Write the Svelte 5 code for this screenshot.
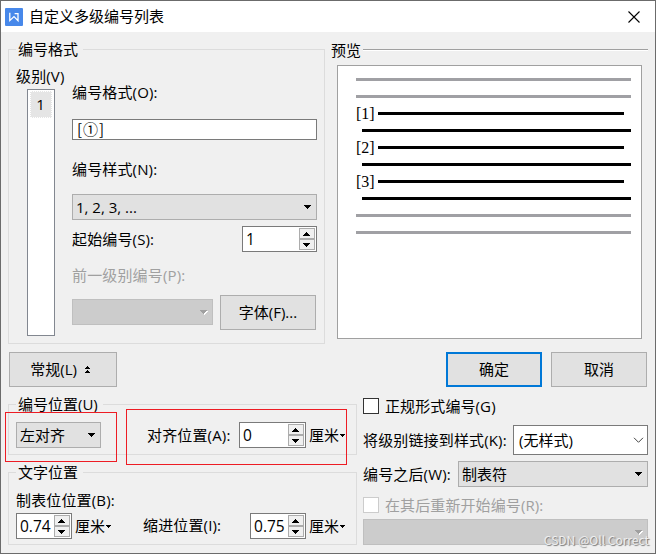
<script lang="ts">
  let level = 1;
  let numberFormat = '[①]';
  let startAt = '1';
  let alignAt = '0';
  let tabStop = '0.74';
  let indentAt = '0.75';
  let formal = false;
  let restart = false;

  const previewLines = [
    { kind: 'grey' },
    { kind: 'grey' },
    { kind: 'first', label: '[1]' },
    { kind: 'next' },
    { kind: 'first', label: '[2]' },
    { kind: 'next' },
    { kind: 'first', label: '[3]' },
    { kind: 'next' },
    { kind: 'grey' },
    { kind: 'grey' }
  ];

  function step(value: string, amount: number) {
    return String(Math.max(0, Number(value) + amount));
  }
</script>

{#snippet arrow()}
  <svg class="arrow" width="8" height="4" viewBox="0 0 8 4" shape-rendering="crispEdges">
    <path d="M0 0h7v1h-1v1h-1v1h-1v1h-1v-1h-1v-1h-1v-1h-1z" fill="currentColor" />
  </svg>
{/snippet}

{#snippet spinner(value, width, onstep)}
  <div class="spinner" style="width: {width}px">
    <span class="value">{value}</span>
    <div class="steps">
      <button aria-label="+" onclick={() => onstep(1)}>
        <svg width="8" height="4" viewBox="0 0 8 4" shape-rendering="crispEdges">
          <path d="M3 0h1v1h1v1h1v1h1v1h-7v-1h1v-1h1v-1h1z" />
        </svg>
      </button>
      <button aria-label="-" onclick={() => onstep(-1)}>
        <svg width="8" height="4" viewBox="0 0 8 4" shape-rendering="crispEdges">
          <path d="M0 0h7v1h-1v1h-1v1h-1v1h-1v-1h-1v-1h-1v-1h-1z" />
        </svg>
      </button>
    </div>
  </div>
{/snippet}

{#snippet unit()}
  <span class="unit">
    厘米
    <svg width="5" height="3" viewBox="0 0 5 3" shape-rendering="crispEdges">
      <path d="M0 0h5v1h-1v1h-1v1h-1v-1h-1v-1h-1z" />
    </svg>
  </span>
{/snippet}

<div class="dialog">
  <header>
    <svg class="logo" width="18" height="18" viewBox="0 0 18 18">
      <rect width="18" height="18" rx="1" fill="#4788ea" />
      <path d="M4.8 4.8V12.6L9 8.6L13 12.6V5.6H9.6" fill="none" stroke="#fff" stroke-width="1.3" />
    </svg>
    <h1>自定义多级编号列表</h1>
    <svg class="close" width="12" height="12" viewBox="0 0 12 12">
      <path d="M.5 .5L11.5 11.5M11.5 .5L.5 11.5" stroke="#000" stroke-width="1.1" />
    </svg>
  </header>

  <div class="top">
    <fieldset class="format">
      <legend>编号格式</legend>
      <div class="levels">
        <span class="label">级别(V)</span>
        <div class="level-list">
          <div class="level">{level}</div>
        </div>
      </div>
      <div class="fields">
        <span class="label">编号格式(O):</span>
        <div class="input">{numberFormat}</div>
        <span class="label style-label">编号样式(N):</span>
        <div class="select">1, 2, 3, ... {@render arrow()}</div>
        <div class="row start">
          <span class="label">起始编号(S):</span>
          {@render spinner(startAt, 75, (n) => (startAt = step(startAt, n)))}
        </div>
        <span class="label disabled-text previous">前一级别编号(P):</span>
        <div class="row font-row">
          <div class="select disabled">{@render arrow()}</div>
          <button class="btn">字体(F)...</button>
        </div>
      </div>
    </fieldset>

    <section class="preview">
      <div class="preview-title">预览<span></span></div>
      <div class="paper">
        {#each previewLines as line}
          <div class="line {line.kind}">
            {#if line.label}<span>{line.label}</span>{/if}
            <i></i>
          </div>
        {/each}
      </div>
    </section>
  </div>

  <div class="buttons">
    <button class="btn general">
      常规(L)
      <svg width="5" height="8" viewBox="0 0 5 8" shape-rendering="crispEdges">
        <path d="M2 0h1v1h1v1h1v1h-5v-1h1v-1h1zM2 4h1v1h1v1h1v1h-5v-1h1v-1h1z" />
      </svg>
    </button>
    <button class="btn primary">确定</button>
    <button class="btn">取消</button>
  </div>

  <div class="bottom">
    <div class="left">
      <fieldset class="position">
        <legend>编号位置(U)</legend>
        <div class="select">左对齐 {@render arrow()}</div>
        <span class="label">对齐位置(A):</span>
        {@render spinner(alignAt, 67, (n) => (alignAt = step(alignAt, n)))}
        {@render unit()}
      </fieldset>
      <fieldset class="text-position">
        <legend>文字位置</legend>
        <span class="label">制表位位置(B):</span>
        <div class="row">
          {@render spinner(tabStop, 56, (n) => (tabStop = step(tabStop, n)))}
          {@render unit()}
          <span class="label indent">缩进位置(I):</span>
          {@render spinner(indentAt, 56, (n) => (indentAt = step(indentAt, n)))}
          {@render unit()}
        </div>
      </fieldset>
    </div>

    <div class="right">
      <label class="check">
        <input type="checkbox" bind:checked={formal} />正规形式编号(G)
      </label>
      <div class="row link">
        <span class="label">将级别链接到样式(K):</span>
        <div class="combo">
          (无样式)
          <svg width="11" height="7" viewBox="0 0 11 7">
            <path d="M1 .8L5.5 5.3L10 .8" fill="none" stroke="#444" />
          </svg>
        </div>
      </div>
      <div class="row after">
        <span class="label">编号之后(W):</span>
        <div class="select">制表符 {@render arrow()}</div>
      </div>
      <label class="check disabled-text">
        <input type="checkbox" disabled bind:checked={restart} />在其后重新开始编号(R):
      </label>
      <div class="select disabled">{@render arrow()}</div>
    </div>
  </div>

  <div class="mark mark-align"></div>
  <div class="mark mark-offset"></div>
  <div class="watermark">CSDN @Oll Correct</div>
</div>

<style>
  .dialog,
  .dialog * {
    box-sizing: border-box;
  }

  .dialog {
    position: relative;
    width: 656px;
    height: 554px;
    overflow: hidden;
    border: 1px solid #6b6b6b;
    background: #f0f0f0;
    color: #000;
    font: 15px/20px 'Open Sans', 'Noto Sans CJK SC', sans-serif;
    white-space: nowrap;
  }

  header {
    display: flex;
    align-items: center;
    height: 31px;
    padding: 0 15px 0 4px;
    background: #fff;
  }

  h1 {
    flex: 1;
    height: 20px;
    margin: 0 0 2px 6px;
    font-size: 15px;
    font-weight: normal;
  }

  .top {
    display: flex;
    height: 304px;
    padding: 8px 7px 0;
  }

  fieldset {
    margin: 0;
    padding: 0;
    border: 1px solid #dcdcdc;
    min-width: 0;
  }

  legend {
    height: 19px;
    margin-left: 7px;
    padding: 0 5px 0 2px;
    line-height: 19px;
  }

  .format {
    display: flex;
    width: 317px;
    height: 304px;
  }

  .levels {
    width: 63px;
    padding: 7px 0 0 7px;
  }

  .label {
    display: block;
    height: 20px;
    letter-spacing: 0.15px;
  }

  .level-list {
    width: 28px;
    height: 247px;
    margin: 3px 0 0 11px;
    padding: 1px 2px;
    border: 1px solid #828790;
    background: #fff;
  }

  .level {
    height: 27px;
    padding-right: 1px;
    border: 1px dotted #fff;
    background: #e5e5e5;
    line-height: 24px;
    text-align: center;
  }

  .fields {
    width: 245px;
    padding-top: 23px;
  }

  .input {
    height: 21px;
    margin-top: 17px;
    padding-left: 4px;
    border: 1px solid #7a7a7a;
    background: #fff;
    font-family: 'Noto Sans CJK SC', sans-serif;
    letter-spacing: 1px;
    line-height: 17px;
  }

  .style-label {
    margin: 19px 0 15px;
  }

  .select {
    display: flex;
    align-items: center;
    justify-content: space-between;
    height: 26px;
    padding: 0 4px 0 3px;
    border: 1px solid #adadad;
    background: #e1e1e1;
  }

  .select.disabled {
    justify-content: flex-end;
    border-color: #bfbfbf;
    background: #ccc;
    color: #a0a0a0;
  }

  .disabled .arrow {
    filter: drop-shadow(1px 1px 0 #fff);
  }

  .disabled-text {
    color: #a0a0a0;
  }

  .row {
    display: flex;
    align-items: center;
  }

  .start {
    justify-content: space-between;
    margin-top: 6px;
  }

  .spinner {
    display: flex;
    flex: none;
    justify-content: space-between;
    height: 26px;
    padding: 1px 1px 1px 3px;
    border: 1px solid #7a7a7a;
    background: #fff;
  }

  .value {
    font-size: 15.5px;
    line-height: 22px;
  }

  .steps {
    display: flex;
    flex: none;
    flex-direction: column;
    width: 16px;
    height: 22px;
  }

  .steps button {
    display: flex;
    flex: 1;
    align-items: center;
    justify-content: center;
    margin: 0;
    padding: 0;
    border: 1px solid #acacac;
    background: #f0f0f0;
  }

  .previous {
    margin-top: 13px;
  }

  .font-row {
    justify-content: space-between;
    margin-top: 10px;
    padding-right: 1px;
  }

  .font-row .select {
    width: 141px;
    margin-bottom: 1px;
  }

  .btn {
    width: 96px;
    height: 35px;
    padding: 0 0 1px;
    border: 1px solid #adadad;
    background: #e1e1e1;
    color: #000;
    font: inherit;
  }

  .preview {
    width: 317px;
    margin-left: 6px;
  }

  .preview-title {
    display: flex;
    align-items: center;
    height: 19px;
    line-height: 16px;
  }

  .preview-title span {
    flex: 1;
    height: 2px;
    margin: 1px 0 0 2px;
    border-top: 1px solid #a0a0a0;
    border-bottom: 1px solid #fff;
  }

  .paper {
    width: 305px;
    height: 274px;
    margin: 6px 0 0 6px;
    padding: 5px 10px 0 18px;
    border: 1px solid #a0a0a0;
    background: #fff;
  }

  .line {
    display: flex;
    align-items: center;
    height: 17px;
  }

  .line i {
    flex: 1;
    height: 3px;
    background: #000;
  }

  .line.grey i {
    background: #a0a0a4;
  }

  .line.next {
    padding-left: 6px;
  }

  .line.first {
    padding-right: 7px;
  }

  .line span {
    width: 22px;
    font: 16px/17px 'Liberation Serif', serif;
  }

  .buttons {
    display: flex;
    height: 35px;
    margin-top: 16px;
    padding: 0 8px;
  }

  .general {
    width: 108px;
    margin-right: auto;
    padding-right: 6px;
  }

  .general svg {
    margin: 0 0 1px 4px;
  }

  .primary {
    margin-right: 9px;
    border: 2px solid #0078d7;
  }

  .bottom {
    display: flex;
    padding: 8px 7px 0;
  }

  .left {
    width: 349px;
  }

  .left legend {
    margin-left: 0;
  }

  .position {
    display: flex;
    height: 60px;
    padding: 8px 0 0 7px;
  }

  .position .select {
    width: 85px;
    margin-right: 46px;
  }

  .position .label {
    width: 92px;
    margin-top: 3px;
  }

  .unit {
    display: flex;
    align-items: center;
    height: 26px;
    margin-left: 3px;
    line-height: 18px;
  }

  .unit svg {
    margin-left: 1px;
  }

  .text-position {
    height: 82px;
    margin-top: 8px;
    padding: 8px 0 0 7px;
  }

  .text-position .row {
    margin-top: 3px;
  }

  .text-position .row .label {
    margin-top: -2px;
  }

  .indent {
    width: 107px;
    margin-left: 32px;
  }

  .right {
    width: 285px;
    margin-left: 6px;
  }

  .check {
    display: flex;
    align-items: center;
    height: 20px;
    margin-top: 1px;
    letter-spacing: 0.1px;
  }

  .check input {
    appearance: none;
    width: 16px;
    height: 16px;
    margin: 0 6px 0 0;
    border: 1px solid #333;
    background: #fff;
  }

  .check input:checked {
    background: #0078d7;
  }

  .check input:disabled {
    border-color: #ccc;
  }

  .link {
    justify-content: space-between;
    margin-top: 9px;
  }

  .combo {
    display: flex;
    align-items: center;
    justify-content: space-between;
    width: 135px;
    height: 30px;
    padding: 0 3px 0 5px;
    border: 1px solid #7a7a7a;
    background: #fff;
  }

  .after {
    justify-content: space-between;
    margin: 6px 0 8px;
  }

  .after .select {
    width: 190px;
  }

  .right > .select {
    margin-top: 4px;
  }

  /* highlight frames drawn over the dialog */
  .mark {
    position: absolute;
    border: 1px solid #ed1c24;
    pointer-events: none;
  }

  .mark-align {
    top: 411px;
    left: 4px;
    width: 112px;
    height: 50px;
  }

  .mark-offset {
    top: 408px;
    left: 125px;
    width: 221px;
    height: 56px;
  }

  .watermark {
    position: absolute;
    right: 6px;
    bottom: 3px;
    color: #eee;
    font: 12px/20px 'Noto Sans CJK SC', sans-serif;
    text-shadow: 1px 1px 1px #777;
  }
</style>
